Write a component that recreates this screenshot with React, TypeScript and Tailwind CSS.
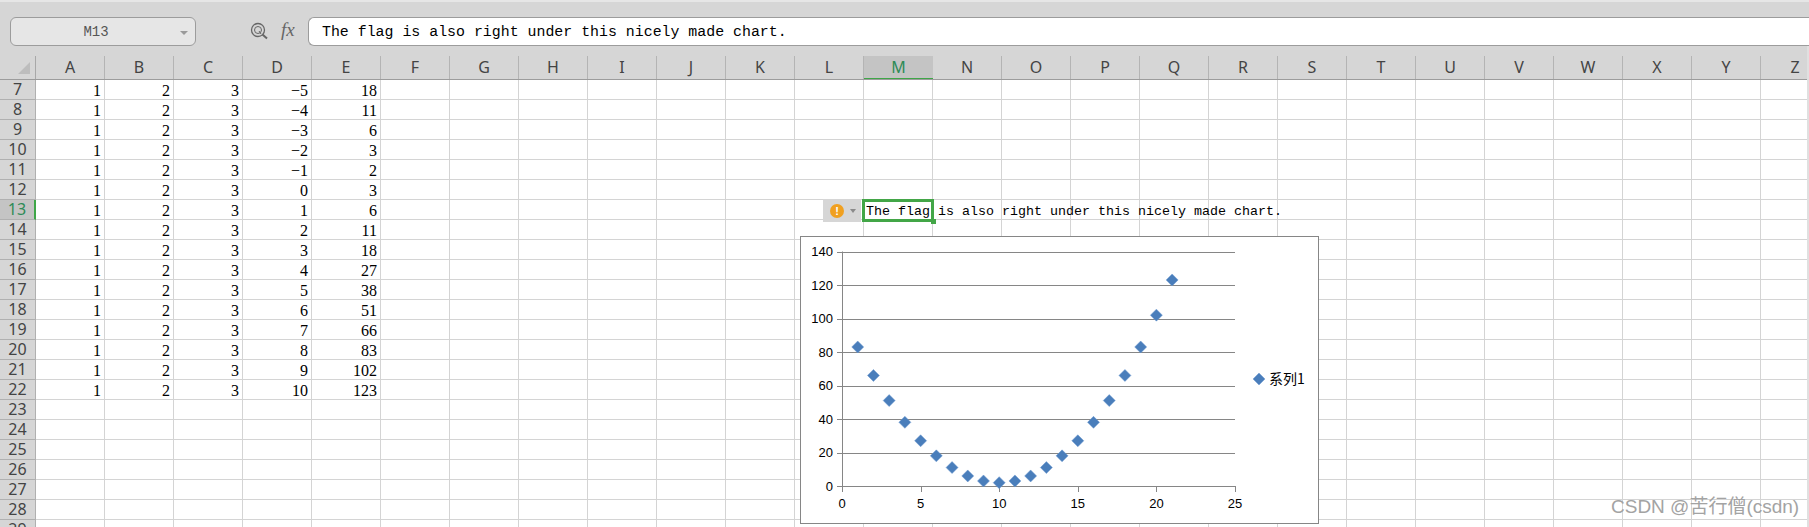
import React from 'react';

const columns = 'ABCDEFGHIJKLMNOPQRSTUVWXYZ'.split('');
const values = [18, 11, 6, 3, 2, 3, 6, 11, 18, 27, 38, 51, 66, 83, 102, 123];
const rowNumbers = Array.from({ length: 23 }, (_, i) => i + 7);
const message = 'The flag is also right under this nicely made chart.';

const points = Array.from({ length: 21 }, (_, i) => ({ x: i + 1, y: (i - 9) * (i - 9) + 2 }));
const X0 = 42;
const Y0 = 250;
const sx = (v: number) => X0 + v * 15.72;
const sy = (v: number) => Y0 - (v / 20) * 33.5;

function Diamond({ cx, cy }: { cx: number; cy: number }) {
    return (
        <polygon
            points={`${cx},${cy - 6} ${cx + 6},${cy} ${cx},${cy + 6} ${cx - 6},${cy}`}
            fill="#4a7ebb"
            stroke="#6f9bd0"
            strokeWidth="0.5"
        />
    );
}

function Chart() {
    return (
        <div className="absolute left-[800px] top-[236px] w-[519px] h-[288px] bg-white border border-[#868686]">
            <svg width="517" height="286" viewBox="1 1 517 286" className="block font-['Liberation_Sans',sans-serif] text-[13px]">
                {[0, 20, 40, 60, 80, 100, 120, 140].map((v) => (
                    <g key={v}>
                        <line x1={X0 - 5} x2={sx(25)} y1={Math.round(sy(v)) + 0.5} y2={Math.round(sy(v)) + 0.5} stroke="#868686" />
                        <text x={X0 - 9} y={sy(v) + 4.5} textAnchor="end" fill="#000">{v}</text>
                    </g>
                ))}
                <line x1={X0 + 0.5} x2={X0 + 0.5} y1={sy(140)} y2={Y0} stroke="#868686" />
                {[0, 5, 10, 15, 20, 25].map((v) => (
                    <g key={v}>
                        <line x1={Math.round(sx(v)) + 0.5} x2={Math.round(sx(v)) + 0.5} y1={Y0} y2={Y0 + 6} stroke="#868686" />
                        <text x={sx(v)} y={Y0 + 22} textAnchor="middle" fill="#000">{v}</text>
                    </g>
                ))}
                {points.map((p) => (
                    <Diamond key={p.x} cx={sx(p.x)} cy={sy(p.y)} />
                ))}
                <Diamond cx={459} cy={143} />
                <text x={469} y={148} fill="#000" className="font-['Noto_Sans_CJK_SC',sans-serif] text-[14px]">系列1</text>
            </svg>
        </div>
    );
}

function FormulaBar() {
    return (
        <div className="h-[46px] shrink-0 bg-[#d6d6d6] border-t-2 border-[#e6e6e6] pt-[15px] flex items-start">
            <div className="ml-[10px] w-[186px] h-[29px] rounded-[6px] bg-[#e6e6e6] border border-[#9c9c9c] flex items-center relative">
                <span className="w-[170px] pt-[2px] text-center text-[#555] font-['Liberation_Mono',monospace] text-[14px]">M13</span>
                <span className="absolute right-[7px] top-[13px] w-0 h-0 border-x-[4px] border-t-[4px] border-x-transparent border-t-[#9a9a9a]"></span>
            </div>
            <svg width="20" height="20" viewBox="0 0 20 20" className="ml-[54px] mt-[5px]" fill="none" stroke="#666">
                <circle cx="8" cy="8" r="6.5" strokeWidth="1.3" />
                <circle cx="8" cy="8" r="3.5" strokeWidth="1" />
                <path d="M9 9 L11 12" strokeWidth="1" />
                <path d="M12.5 12.5 L17 16.5" strokeWidth="2" />
            </svg>
            <span className="ml-[11px] w-[16px] mt-[1px] text-[#666] italic font-['Liberation_Serif',serif] text-[19px] leading-[24px]">fx</span>
            <div className="ml-[11px] flex-1 h-[29px] rounded-l-[6px] bg-white border border-r-0 border-[#9c9c9c] pl-[13px] pt-[2px] flex items-center">
                <span className="text-black font-['Liberation_Mono',monospace] text-[14.9px] whitespace-nowrap">{message}</span>
            </div>
        </div>
    );
}

function ColumnHeaders() {
    return (
        <div className="h-[34px] shrink-0 flex items-end bg-[#d6d6d6] border-b border-[#9c9c9c] overflow-hidden">
            <div className="w-[36px] h-[23px] shrink-0 border-r border-[#a8a8a8] relative">
                <svg width="12" height="12" className="absolute left-[18px] top-[6px]"><polygon points="0,12 12,0 12,12" fill="#bdbdbd" /></svg>
            </div>
            {columns.map((c) => (
                <div
                    key={c}
                    className={
                        c === 'M'
                            ? "w-[69px] h-[24px] -mb-px shrink-0 bg-[#c4c4c4] border-b-2 border-[#3fa648] text-[#2e8b57] text-center font-['Noto_Sans',sans-serif] text-[16px] leading-[22px]"
                            : "w-[69px] h-[23px] shrink-0 border-r border-[#b4b4b4] text-[#444] text-center font-['Noto_Sans',sans-serif] text-[16px] leading-[22px]"
                    }
                >
                    {c}
                </div>
            ))}
        </div>
    );
}

function Row({ n }: { n: number }) {
    const i = n - 7;
    const hasData = n <= 22;
    const cells = hasData ? ['1', '2', '3', String(i - 5).replace('-', '−'), String(values[i])] : [];
    return (
        <div className="h-[20px] flex">
            <div
                className={
                    n === 13
                        ? "w-[36px] shrink-0 bg-[#c4c4c4] border-r-2 border-[#3fa648] border-b border-b-[#b0b0b0] text-[#2e8b57] text-center font-['Noto_Sans',sans-serif] text-[16px] leading-[19px]"
                        : "w-[36px] shrink-0 bg-[#d6d6d6] border-r border-b border-[#b0b0b0] text-[#444] text-center font-['Noto_Sans',sans-serif] text-[16px] leading-[19px]"
                }
            >
                {n}
            </div>
            {columns.map((c, ci) => (
                <div
                    key={c}
                    className="w-[69px] shrink-0 border-r border-b border-[#d4d4d4] text-right pr-[3px] text-black font-['Liberation_Serif',serif] text-[16px] leading-[21px]"
                >
                    {cells[ci]}
                </div>
            ))}
        </div>
    );
}

export default function App() {
    return (
        <div className="relative w-[1809px] h-[527px] overflow-hidden bg-white flex flex-col">
            <FormulaBar />
            <div className="flex-1 min-h-0 flex overflow-hidden">
                <div className="w-[1807px] overflow-hidden flex flex-col">
                    <ColumnHeaders />
                    {rowNumbers.map((n) => (
                        <Row key={n} n={n} />
                    ))}
                </div>
                <div className="flex-1 bg-[#e0e0e0]"></div>
            </div>

            {/* error flag, active cell and the text running out of it */}
            <div className="absolute left-[823px] top-[199px] w-[38px] h-[23px] bg-[#d6d6d6] flex items-center pl-[7px]">
                <span className="w-[14px] h-[14px] rounded-full bg-[#f0a020] text-white text-[11px] font-bold leading-[14px] text-center font-['Liberation_Sans',sans-serif]">!</span>
                <span className="ml-[6px] w-0 h-0 border-x-[3px] border-t-[4px] border-x-transparent border-t-[#8a8a8a]"></span>
            </div>
            <div className="absolute left-[862px] top-[199px] w-[72px] h-[23px] border-[3px] border-[#43a647]"></div>
            <div className="absolute left-[931px] top-[219px] w-[5px] h-[5px] bg-[#43a647]"></div>
            <span className="absolute left-[866px] top-[202px] text-black font-['Liberation_Mono',monospace] text-[13.33px] leading-[19px] whitespace-nowrap">{message}</span>

            <Chart />

            <span className="absolute left-[1611px] top-[495px] text-[#a3a3a3] font-['Liberation_Sans','Noto_Sans_CJK_SC',sans-serif] text-[19px] leading-[24px] whitespace-nowrap">CSDN @苦行僧(csdn)</span>
        </div>
    );
}
